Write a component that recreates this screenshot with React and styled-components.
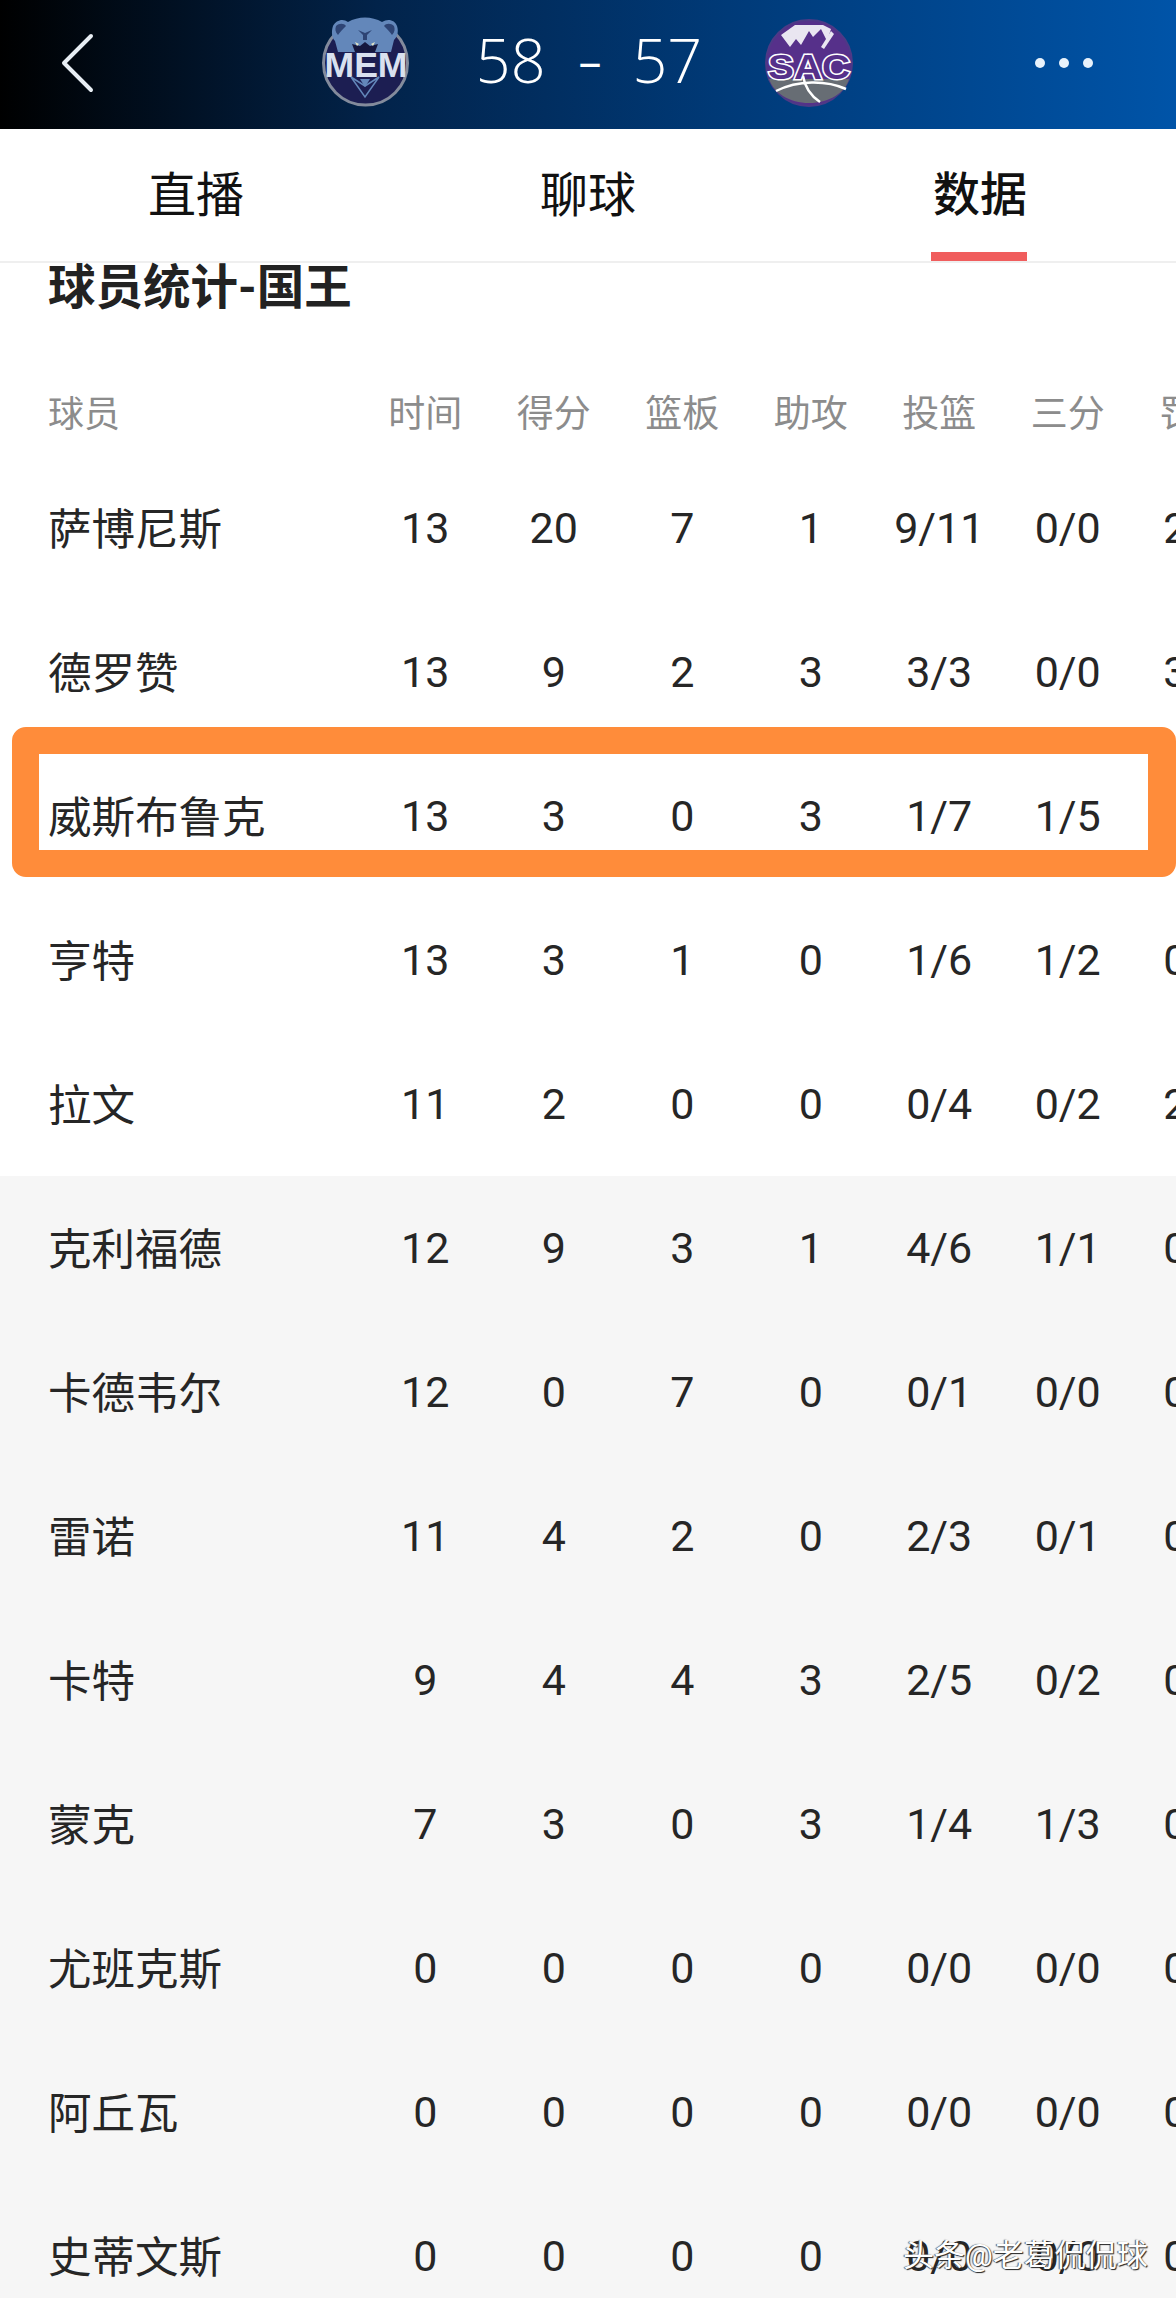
import React from "react";
import styled, { createGlobalStyle } from "styled-components";

const GlobalStyle = createGlobalStyle`
    html, body {
        margin: 0;
        padding: 0;
        background: #fff;
    }
    body {
        font-family: Roboto, "Noto Sans CJK SC", sans-serif;
    }
`

const Page = styled.div`
    position: relative;
    width: 1176px;
    height: 2298px;
    overflow: hidden;
    background: #fff;
`

const Header = styled.header`
    height: 129px;
    box-sizing: border-box;
    display: flex;
    align-items: center;
    padding: 0 0 4px 58px;
    background: linear-gradient(90deg, #000 0%, #02234a 32%, #003a78 62%, #0054a8 100%);
    color: #fff;
`

const BackIcon = styled.svg`
    width: 40px;
    height: 64px;
    margin-right: 202px;
    flex: none;
`

const Logo = styled.svg`
    width: 120px;
    height: 110px;
    flex: none;
`

const Score = styled.div`
    width: 321px;
    display: flex;
    justify-content: center;
    align-items: center;
    padding: 0 0 6px 17px;
    box-sizing: border-box;
    font-family: "Open Sans", Roboto, sans-serif;
    font-weight: 300;
    font-size: 61px;
    line-height: 70px;
`

const Dash = styled.span`
    margin: 0 31px 0 33px;
    font-size: 46px;
    font-weight: 400;
`

const Dots = styled.div`
    display: flex;
    gap: 14px;
    margin-left: 174px;
`

const Dot = styled.i`
    width: 10px;
    height: 10px;
    border-radius: 50%;
    background: #e8f2fb;
`

const Tabs = styled.nav`
    height: 134px;
    display: grid;
    grid-template-columns: repeat(3, 392px);
    border-bottom: 2px solid #efefef;
    box-sizing: border-box;
    background: #fff;
`

const Tab = styled.div`
    position: relative;
    display: flex;
    justify-content: center;
    align-items: center;
    padding-bottom: 9px;
    font-size: ${props => (props.active ? 47 : 48)}px;
    color: #111;
    font-weight: ${props => (props.active ? 500 : 400)};
    &::after {
        content: "";
        display: ${props => (props.active ? "block" : "none")};
        position: absolute;
        left: 147px;
        bottom: 0;
        width: 96px;
        height: 9px;
        background: #f05d5d;
    }
`

const Title = styled.h2`
    margin: 0;
    height: 50px;
    padding-left: 48px;
    font-size: 47.5px;
    line-height: 50px;
    font-weight: 700;
    color: #222;
`

const Row = styled.div`
    display: grid;
    grid-template-columns: 361px repeat(7, 128.5px);
    height: 144px;
    align-items: center;
    font-size: 43px;
    color: #262626;
    background: ${props => (props.bench ? "#f6f6f6" : "#fff")};
`

const HeadRow = styled(Row)`
    height: 86px;
    margin-top: 57px;
    padding-bottom: 4px;
    box-sizing: border-box;
    font-size: 37px;
    color: #8c8c8c;
`

const Name = styled.div`
    padding: 0 0 4px 48px;
    font-size: 43.5px;
    white-space: nowrap;
`

const HeadName = styled.div`
    padding-left: 48px;
    font-size: 36px;
`

const Cell = styled.div`
    text-align: center;
    white-space: nowrap;
`

const Highlight = styled.div`
    position: absolute;
    left: 12px;
    top: 727px;
    width: 1164px;
    height: 150px;
    box-sizing: border-box;
    border: solid #ff8c3a;
    border-width: 27px 28px 27px 27px;
    border-radius: 14px;
`

const Watermark = styled.div`
    position: absolute;
    left: 903px;
    top: 2237px;
    font-size: 31px;
    line-height: 38px;
    color: #fff;
    white-space: nowrap;
    text-shadow: 1px 1px 1px #222, -1px 0 1px #555;
`

const LogoText = styled.text`
    font-family: "Liberation Sans", sans-serif;
    font-weight: 700;
`

const columns = ["时间", "得分", "篮板", "助攻", "投篮", "三分", "罚球"];

const players = [
    ["萨博尼斯", "13", "20", "7", "1", "9/11", "0/0", "2/2"],
    ["德罗赞", "13", "9", "2", "3", "3/3", "0/0", "3/3"],
    ["威斯布鲁克", "13", "3", "0", "3", "1/7", "1/5", "0/0"],
    ["亨特", "13", "3", "1", "0", "1/6", "1/2", "0/0"],
    ["拉文", "11", "2", "0", "0", "0/4", "0/2", "2/2"],
    ["克利福德", "12", "9", "3", "1", "4/6", "1/1", "0/0"],
    ["卡德韦尔", "12", "0", "7", "0", "0/1", "0/0", "0/0"],
    ["雷诺", "11", "4", "2", "0", "2/3", "0/1", "0/0"],
    ["卡特", "9", "4", "4", "3", "2/5", "0/2", "0/0"],
    ["蒙克", "7", "3", "0", "3", "1/4", "1/3", "0/0"],
    ["尤班克斯", "0", "0", "0", "0", "0/0", "0/0", "0/0"],
    ["阿丘瓦", "0", "0", "0", "0", "0/0", "0/0", "0/0"],
    ["史蒂文斯", "0", "0", "0", "0", "0/0", "0/0", "0/0"],
];

const MemLogo = () => (
    <Logo viewBox="0 0 120 110">
        <circle cx="65.5" cy="55" r="42" fill="#1c1e52" stroke="#838b9c" strokeWidth="3" />
        <g transform="translate(0 -6)">
            <path d="M33 24c3-6 10-8 15-4 10-6 24-6 34 0 6-4 13-2 15 4 2 6 0 11-3 14l-3 12H38l-3-11c-3-3-4-9-2-15z" fill="#6387ba" />
            <path d="M36 24c3-3 8-3 10 0-3 3-6 6-8 9-3-3-3-6-2-9zM94 24c-3-3-8-3-10 0 3 3 6 6 8 9 3-3 3-6 2-9z" fill="#2e4474" />
            <path d="M52 42l8 2 5-4 5 4 8-2-3 8H55z" fill="#16183f" />
            <path d="M55 40l4 2-2 2zM75 40l-4 2 2 2z" fill="#e4e6c8" />
            <path d="M58 28l7 3 7-3-5 5v5h-4v-5z" fill="#2e4474" />
        </g>
        <LogoText x="66" y="69" textAnchor="middle" fontSize="35" fill="#d9e1ef" textLength="83" lengthAdjust="spacingAndGlyphs">MEM</LogoText>
        <g transform="translate(0 -9)">
            <path d="M51 78l14 20 14-20-14 9z" fill="none" stroke="#6387ba" strokeWidth="1.5" />
            <path d="M60 80h10l-5 8z" fill="#6387ba" />
        </g>
    </Logo>
);

const SacLogo = () => (
    <Logo viewBox="0 0 120 110">
        <circle cx="68" cy="55" r="43" fill="#56308a" stroke="#4d3a86" strokeWidth="2" />
        <g transform="translate(5 3)">
            <path d="M35 24l14-10h28l8 4-4 12-6-12-8 8-4-6-8 14-5-6-6 8z" fill="#e9e6f1" />
            <path d="M85 20l-10 16 3 2 10-15z" fill="#e9e6f1" />
        </g>
        <path d="M28 71h80c-4 14-20 24-40 24s-35-10-40-24z" fill="#676d74" />
        <path d="M35 83c22-11 50-11 70-2M62 68c2 12 8 20 17 26" fill="none" stroke="#fff" strokeWidth="2.5" />
        <LogoText x="68" y="71" textAnchor="middle" fontSize="35" fill="#56308a" stroke="#fff" strokeWidth="3" paintOrder="stroke" textLength="82" lengthAdjust="spacingAndGlyphs">SAC</LogoText>
    </Logo>
);

const App = () => {
    return (
        <Page>
            <GlobalStyle />
            <Header>
                <BackIcon viewBox="0 0 40 64" fill="none">
                    <path d="M33 5L6 32l27 27" stroke="#e8eef4" strokeWidth="4" strokeLinecap="round" strokeLinejoin="round" />
                </BackIcon>
                <MemLogo />
                <Score>
                    <span>58</span>
                    <Dash>–</Dash>
                    <span>57</span>
                </Score>
                <SacLogo />
                <Dots>
                    <Dot />
                    <Dot />
                    <Dot />
                </Dots>
            </Header>
            <Tabs>
                <Tab>直播</Tab>
                <Tab>聊球</Tab>
                <Tab active>数据</Tab>
            </Tabs>
            <Title>球员统计-国王</Title>
            <HeadRow>
                <HeadName>球员</HeadName>
                {columns.map(c => <Cell key={c}>{c}</Cell>)}
            </HeadRow>
            {players.map((p, i) => (
                <Row key={p[0]} bench={i >= 5}>
                    <Name>{p[0]}</Name>
                    {p.slice(1).map((v, j) => <Cell key={j}>{v}</Cell>)}
                </Row>
            ))}
            <Highlight />
            <Watermark>头条@老葛侃侃球</Watermark>
        </Page>
    );
}

export default App;
